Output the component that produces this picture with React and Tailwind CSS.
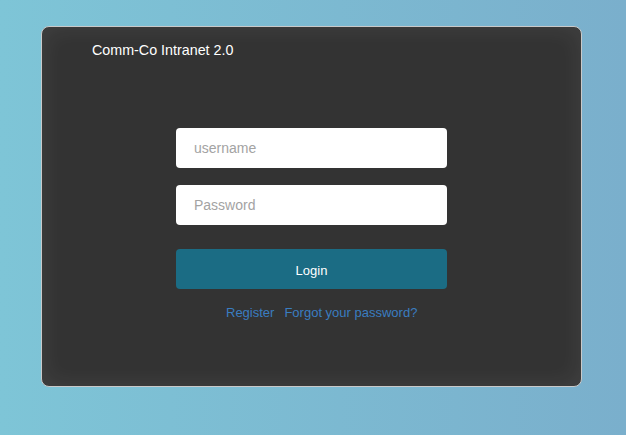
import { useState } from "react";

function App() {
  const [username, setUsername] = useState("");
  const [password, setPassword] = useState("");

  return (
    <div
      className="h-[435px] w-full pt-[26px] bg-gradient-to-r from-[#7ec5d7] to-[#7aafcc]"
      style={{ fontFamily: '"Liberation Sans", Arial, sans-serif' }}
    >
      {/* Login card */}
      <div className="ml-[41px] w-[541px] h-[361px] rounded-[8px] border border-[#c9c9c9] bg-[#333333] shadow-[inset_0_0_24px_rgba(255,255,255,0.08)] flex flex-col">
        <h1 className="pl-[50px] pt-[14px] text-[14.3px] leading-[18px] text-white">
          Comm-Co Intranet 2.0
        </h1>
        <div className="mt-[69px] mx-auto w-[271px] flex flex-col">
          <input
            type="text"
            placeholder="username"
            value={username}
            onChange={(e) => setUsername(e.target.value)}
            className="h-[40px] rounded-[4px] bg-white px-[18px] text-[14px] text-[#333] placeholder:text-[#a3a3a3] outline-none"
          />
          <input
            type="password"
            placeholder="Password"
            value={password}
            onChange={(e) => setPassword(e.target.value)}
            className="mt-[17px] h-[40px] rounded-[4px] bg-white px-[18px] text-[14px] text-[#333] placeholder:text-[#a3a3a3] outline-none"
          />
          <button className="mt-[24px] h-[40px] pt-[3px] rounded-[4px] bg-[#1b6c84] text-[13px] text-white">
            Login
          </button>
          <div className="mt-[14px] pl-[50px] flex gap-[10px] text-[13px] text-[#3a7dc0]">
            <a href="#">Register</a>
            <a href="#">Forgot your password?</a>
          </div>
        </div>
      </div>
    </div>
  );
}

export default App;
